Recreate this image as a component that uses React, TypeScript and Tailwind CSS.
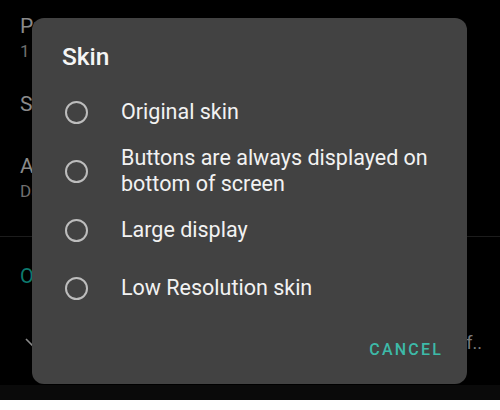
import React from 'react'

const options = [
    'Original skin',
    'Buttons are always displayed on bottom of screen',
    'Large display',
    'Low Resolution skin',
]

const App: React.FC = () =>
{
    return (
        <div className="relative w-[500px] h-[410px] flex flex-col overflow-hidden font-['Roboto',sans-serif]">
            {/* Settings screen behind the dialog */}
            <div className="h-[385px] bg-black flex flex-col text-[#8a8a8a]">
                <div className="pl-[20px] pt-[12px] h-[82px]">
                    <div className="text-[21px] leading-[28px]">Precision</div>
                    <div className="text-[17px] leading-[22px] text-[#6f6f6f]">1 s</div>
                </div>
                <div className="pl-[20px] pt-[8px] h-[62px]">
                    <div className="text-[21px] leading-[28px]">Skin</div>
                </div>
                <div className="pl-[20px] pt-[8px] h-[93px] border-b border-[#1c1c1c]">
                    <div className="text-[21px] leading-[28px]">Accent</div>
                    <div className="text-[17px] leading-[22px] text-[#6f6f6f]">Dark</div>
                </div>
                <div className="pl-[20px] pt-[26px] h-[62px] text-[20px] leading-[26px] text-[#0d7a6e]">Other</div>
                <div className="flex items-start pt-[32px] pl-[25px] pr-[18px]">
                    <svg width="16" height="10" viewBox="0 0 16 10" className="mt-[7px] shrink-0">
                        <path d="M1 1 L8 8 L15 1" fill="none" stroke="#8a8a8a" strokeWidth="1.6" />
                    </svg>
                    <div className="flex-1 overflow-hidden flex justify-end">
                        <span className="whitespace-nowrap text-[18px] leading-[24px] text-[#7a7a7a]">of..</span>
                    </div>
                </div>
            </div>
            <div className="h-[15px] bg-[#0a0a0a]" />
            <div className="h-[10px] bg-white" />

            {/* Skin dialog */}
            <div className="absolute left-[32px] top-[18px] w-[435px] h-[366px] rounded-[12px] bg-[#424242] flex flex-col">
                <div className="pt-[24px] px-[30px] text-[24.5px] leading-[30px] font-medium text-[#f5f5f5]">Skin</div>
                <div className="mt-[11px] flex flex-col">
                    {options.map((label) => (
                        <div key={label} className="min-h-[58px] py-[4px] flex items-center">
                            <div className="w-[89px] shrink-0 flex justify-start pl-[33px]">
                                <div className="w-[23px] h-[23px] rounded-full border-[2px] border-[#bdbdbd]" />
                            </div>
                            <div className="pr-[24px] text-[21.5px] leading-[26px] text-[#f2f2f2]">{label}</div>
                        </div>
                    ))}
                </div>
                <div className="mt-auto flex justify-end pr-[24px] pb-[16px]">
                    <div className="h-[36px] flex items-center text-[16px] font-medium tracking-[2.2px] text-[#3dbaa8]">CANCEL</div>
                </div>
            </div>
        </div>
    )
}

export default App
